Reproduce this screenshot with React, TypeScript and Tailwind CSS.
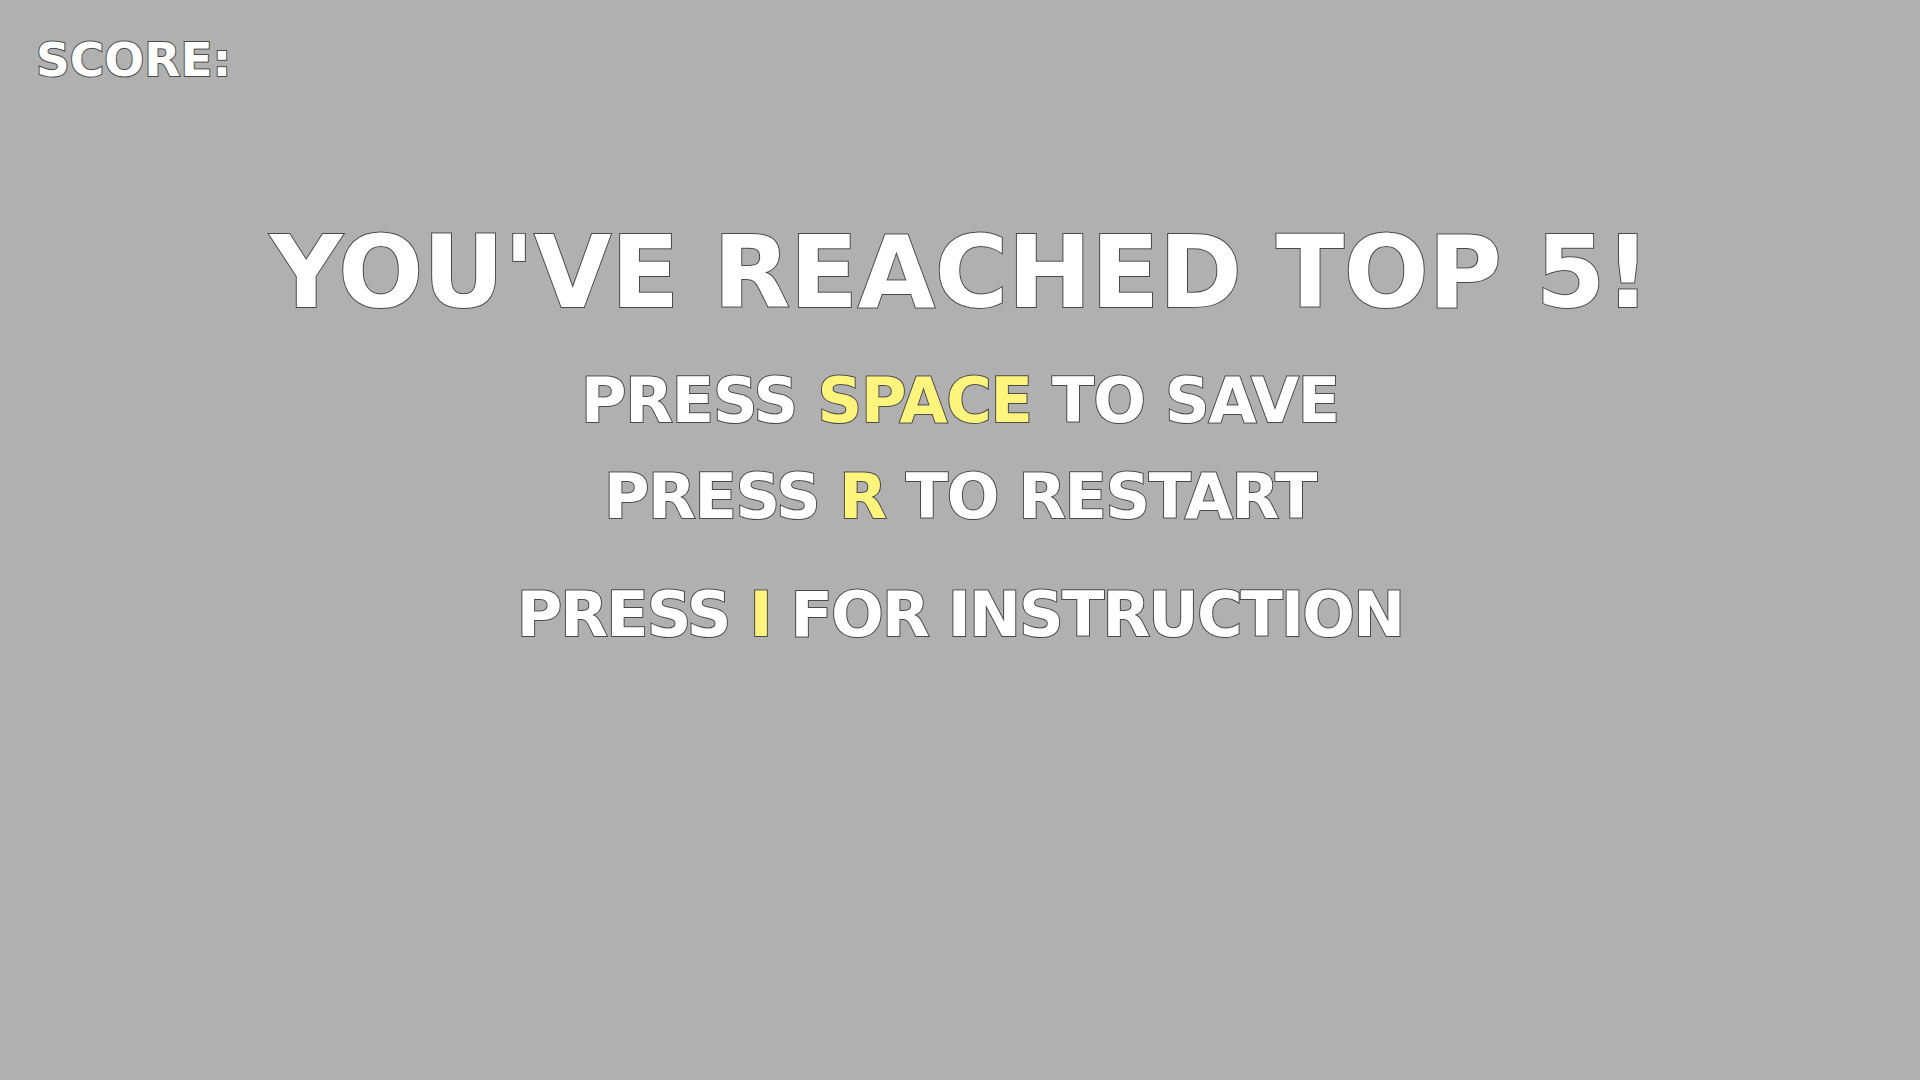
import React from 'react';

const outline = '[-webkit-text-stroke:2px_#4a4a4a] [paint-order:stroke_fill]';

const Key: React.FC<{ children: React.ReactNode }> = ({ children }) => (
  <span className="text-[#fff57c]">{children}</span>
);

const App: React.FC = () => {
  return (
    <div className="w-[1920px] h-[1080px] bg-[#b0b0b0] overflow-hidden font-['DejaVu_Sans',sans-serif] font-bold text-white uppercase">
      {/* Score */}
      <div className={`pt-[36px] pl-[36px] text-[47px] leading-none ${outline}`}>SCORE:</div>

      {/* Message */}
      <div className={`flex flex-col items-center mt-[140px] ${outline}`}>
        <h1 className="text-[100px] leading-none font-bold tracking-[-0.4px]">YOU'VE REACHED TOP 5!</h1>
        <p className="mt-[47px] text-[62px] leading-none tracking-[-1.2px]">
          PRESS <Key>SPACE</Key> TO SAVE
        </p>
        <p className="mt-[34px] text-[62px] leading-none tracking-[-1.4px]">
          PRESS <Key>R</Key> TO RESTART
        </p>
        <p className="mt-[56px] text-[62px] leading-none tracking-[-1.8px]">
          PRESS <Key>I</Key> FOR INSTRUCTION
        </p>
      </div>
    </div>
  );
};

export default App;
